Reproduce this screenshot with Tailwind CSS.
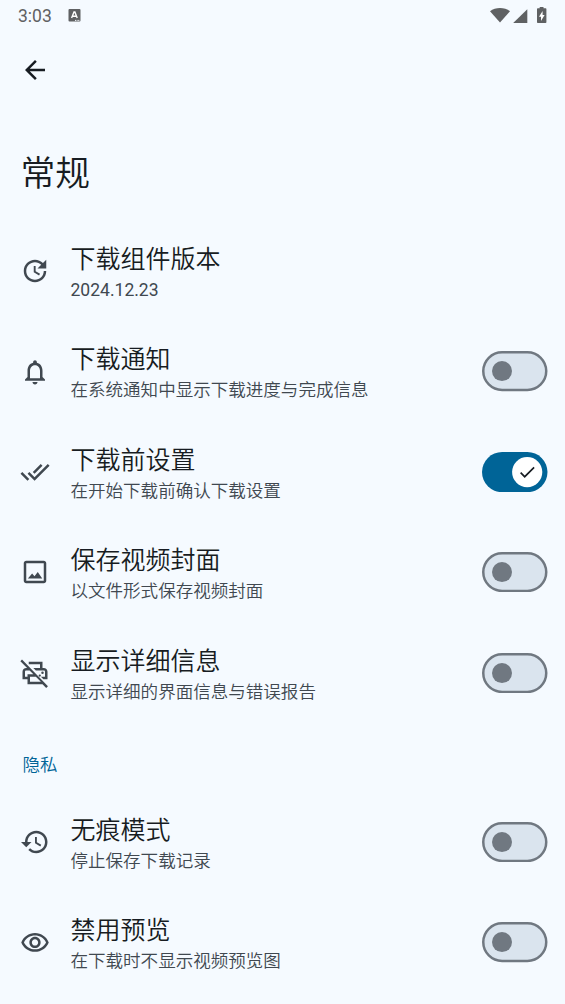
<!DOCTYPE html>
<html lang="zh-CN">
<head>
<meta charset="utf-8">
<meta name="viewport" content="width=device-width, initial-scale=1">
<title>常规</title>
<script src="https://cdn.jsdelivr.net/npm/@tailwindcss/browser@4"></script>
</head>
<body class="h-[1004px] overflow-hidden bg-[#f5faff] font-[Roboto,'Noto_Sans_CJK_SC_DemiLight','Noto_Sans_CJK_SC',sans-serif] text-[#171c22]">
<header class="flex h-8 items-center justify-between pl-[18px] pr-[17px] text-[#5f6163]">
  <div class="flex items-center gap-4">
    <span class="text-[17.5px] leading-8">3:03</span>
    <svg class="mb-[2px] h-[13px] w-[13px]" viewBox="0 0 13 13"><rect x="0.5" y="0" width="12" height="12.5" rx="1" fill="#5f6163"/><path d="M3.6 9 6 3h.9l2.3 6M4.6 7.2h3.6" fill="none" stroke="#fff" stroke-width="1.4"/><path d="M7 11.4h5" stroke="#f6faff" stroke-width="1" stroke-dasharray="1 .6"/></svg>
  </div>
  <div class="flex items-center">
    <svg class="h-[18px] w-[58px]" viewBox="490 6 58 18" fill="#5f6163"><path d="M490 10.200C495.600 5.800 504.400 5.800 510 10.200L500 21.600Z"/><path d="M527.300 8.200V22H513.200Z"/><path d="M539.700 5.800h3.800v1.500h2.100q.8 0 .8.800v13.200q0 .8-.8.800h-7.800q-.8 0-.8-.8V8.100q0-.8.8-.8h1.900z"/><path fill="#fff" d="M542.600 10v4h2l-3.600 6v-4.300h-2z"/></svg>
  </div>
</header>
<nav class="flex h-[76px] items-center pl-5">
  <svg class="h-[30px] w-[30px]" viewBox="0 0 24 24" fill="currentColor"><path d="M20 11H7.830l5.590-5.590L12 4l-8 8 8 8 1.410-1.410L7.830 13H20v-2z"/></svg>
</nav>
<h1 class="mt-[41px] flex h-[50px] items-center pl-[20.500px] text-[34.800px] font-[350] leading-[50px]">常规</h1>
<main class="mt-[22px] flex flex-col">
  <section class="flex h-[100.400px] items-center pl-5 pr-[17.500px]">
    <svg class="h-[30px] w-[30px] shrink-0 text-[#404850]" viewBox="0 0 24 24" fill="currentColor"><path d="M11 8v5l4.250 2.520.770-1.280-3.520-2.090V8H11zm10 2V3l-2.640 2.640C16.740 4.010 14.490 3 12 3c-4.970 0-9 4.030-9 9s4.030 9 9 9 9-4.030 9-9h-2c0 3.860-3.140 7-7 7s-7-3.140-7-7 3.140-7 7-7c1.930 0 3.680.790 4.950 2.050L14 10h7z"/></svg>
    <div class="ml-[20.500px] flex-1 pt-[2.500px]"><h2 class="text-[25px] font-[350] leading-[35px]">下载组件版本</h2><p class="text-[17.550px] leading-[26px] text-[#404850]">2024.12.23</p></div>
  </section>
  <section class="flex h-[100.400px] items-center pl-5 pr-[17.500px]">
    <svg class="h-[30px] w-[30px] shrink-0 text-[#404850]" viewBox="0 0 24 24" fill="currentColor"><path d="M12 22c1.100 0 2-.9 2-2h-4c0 1.100.9 2 2 2zm6-6v-5c0-3.070-1.630-5.640-4.500-6.320V4c0-.83-.67-1.500-1.500-1.500s-1.500.67-1.500 1.500v.68C7.640 5.360 6 7.920 6 11v5l-2 2v1h16v-1l-2-2zm-2 1H8v-6c0-2.480 1.510-4.500 4-4.500s4 2.020 4 4.500v6z"/></svg>
    <div class="ml-[20.500px] flex-1 pt-[2.500px]"><h2 class="text-[25px] font-[350] leading-[35px]">下载通知</h2><p class="text-[17.550px] font-[350] leading-[26px] text-[#404850]">在系统通知中显示下载进度与完成信息</p></div>
    <svg class="h-[40.200px] w-[65.500px]" viewBox="0 0 65.500 40.200"><rect x="1.250" y="1.250" width="63" height="37.700" rx="18.850" fill="#dae4ee" stroke="#707881" stroke-width="2.500"/><circle cx="20" cy="20.100" r="10" fill="#707881"/></svg>
  </section>
  <section class="flex h-[100.400px] items-center pl-5 pr-[17.500px]">
    <svg class="h-[30px] w-[30px] shrink-0 text-[#404850]" viewBox="0 0 24 24" fill="currentColor"><path d="M18 7l-1.410-1.410-6.340 6.340 1.410 1.410L18 7zm4.240-1.410L11.660 16.170 7.480 12l-1.410 1.410L11.660 19l12-12-1.420-1.410zM.41 13.410L6 19l1.410-1.410L1.830 12 .41 13.410z"/></svg>
    <div class="ml-[20.500px] flex-1 pt-[2.500px]"><h2 class="text-[25px] font-[350] leading-[35px]">下载前设置</h2><p class="text-[17.550px] font-[350] leading-[26px] text-[#404850]">在开始下载前确认下载设置</p></div>
    <svg class="h-[40.200px] w-[65.500px]" viewBox="0 0 65.500 40.200"><rect width="65.500" height="40.200" rx="20.100" fill="#006497"/><circle cx="45.200" cy="20.100" r="15.100" fill="#fff"/><path transform="translate(35.200 10.100) scale(.8333)" fill="#171c22" d="M9 16.170L4.830 12l-1.420 1.410L9 19 21 7l-1.410-1.410z"/></svg>
  </section>
  <section class="flex h-[100.400px] items-center pl-5 pr-[17.500px]">
    <svg class="h-[30px] w-[30px] shrink-0 text-[#404850]" viewBox="0 0 24 24" fill="currentColor"><path d="M19 5v14H5V5h14m0-2H5c-1.100 0-2 .9-2 2v14c0 1.100.9 2 2 2h14c1.100 0 2-.9 2-2V5c0-1.100-.9-2-2-2z"/><path d="M14.200 12l-2.600 3.300-1.900-2.100L6.300 17.200h11.500z"/></svg>
    <div class="ml-[20.500px] flex-1 pt-[2.500px]"><h2 class="text-[25px] font-[350] leading-[35px]">保存视频封面</h2><p class="text-[17.550px] font-[350] leading-[26px] text-[#404850]">以文件形式保存视频封面</p></div>
    <svg class="h-[40.200px] w-[65.500px]" viewBox="0 0 65.500 40.200"><rect x="1.250" y="1.250" width="63" height="37.700" rx="18.850" fill="#dae4ee" stroke="#707881" stroke-width="2.500"/><circle cx="20" cy="20.100" r="10" fill="#707881"/></svg>
  </section>
  <section class="flex h-[100.400px] items-center pl-5 pr-[17.500px]">
    <svg class="h-[30px] w-[30px] shrink-0 text-[#404850]" viewBox="0 0 24 24" fill="currentColor"><path d="M1.600 1.200L.3 2.600 5.700 8H5c-1.660 0-3 1.340-3 3v6h4v4h12l2.950 2.960 1.410-1.410zM6 15H4v-4c0-.55.45-1 1-1h2.700l3 3H6v2zm2 4v-4h4.700l4 4H8zM7 3v2h9v3h-5.340l2 2H19c.55 0 1 .45 1 1v4h-3.300l2 2H22v-6c0-1.660-1.340-3-3-3h-1V3z"/><circle cx="18" cy="11.700" r="1"/><circle cx="15.800" cy="14" r=".9"/></svg>
    <div class="ml-[20.500px] flex-1 pt-[2.500px]"><h2 class="text-[25px] font-[350] leading-[35px]">显示详细信息</h2><p class="text-[17.550px] font-[350] leading-[26px] text-[#404850]">显示详细的界面信息与错误报告</p></div>
    <svg class="h-[40.200px] w-[65.500px]" viewBox="0 0 65.500 40.200"><rect x="1.250" y="1.250" width="63" height="37.700" rx="18.850" fill="#dae4ee" stroke="#707881" stroke-width="2.500"/><circle cx="20" cy="20.100" r="10" fill="#707881"/></svg>
  </section>
  <h3 class="h-[69px] pl-[22.500px] pt-[29px] text-[17.550px] font-[350] leading-[26px] text-[#006497]">隐私</h3>
  <section class="flex h-[100.400px] items-center pl-5 pr-[17.500px]">
    <svg class="h-[30px] w-[30px] shrink-0 text-[#404850]" viewBox="0 0 24 24" fill="currentColor"><path d="M13 3c-4.970 0-9 4.030-9 9H.8L5 16.200 9.200 12H6c0-3.870 3.130-7 7-7s7 3.130 7 7-3.130 7-7 7c-1.930 0-3.680-.79-4.940-2.060l-1.420 1.420C8.270 19.990 10.510 21 13 21c4.970 0 9-4.030 9-9s-4.030-9-9-9zm-1 5v5l4.250 2.520.77-1.280-3.520-2.080V8H12z"/></svg>
    <div class="ml-[20.500px] flex-1 pt-[2.500px]"><h2 class="text-[25px] font-[350] leading-[35px]">无痕模式</h2><p class="text-[17.550px] font-[350] leading-[26px] text-[#404850]">停止保存下载记录</p></div>
    <svg class="h-[40.200px] w-[65.500px]" viewBox="0 0 65.500 40.200"><rect x="1.250" y="1.250" width="63" height="37.700" rx="18.850" fill="#dae4ee" stroke="#707881" stroke-width="2.500"/><circle cx="20" cy="20.100" r="10" fill="#707881"/></svg>
  </section>
  <section class="flex h-[100.400px] items-center pl-5 pr-[17.500px]">
    <svg class="h-[30px] w-[30px] shrink-0 text-[#404850]" viewBox="0 0 24 24" fill="currentColor"><path d="M12 6c3.790 0 7.170 2.130 8.820 5.500C19.170 14.870 15.790 17 12 17s-7.170-2.130-8.820-5.500C4.830 8.130 8.210 6 12 6m0-2C7 4 2.730 7.110 1 11.500 2.730 15.890 7 19 12 19s9.270-3.110 11-7.500C21.270 7.110 17 4 12 4zm0 5c1.380 0 2.500 1.120 2.500 2.500S13.380 14 12 14s-2.500-1.120-2.500-2.500S10.620 9 12 9m0-2c-2.480 0-4.500 2.020-4.500 4.500S9.520 16 12 16s4.500-2.020 4.500-4.500S14.480 7 12 7z"/></svg>
    <div class="ml-[20.500px] flex-1 pt-[2.500px]"><h2 class="text-[25px] font-[350] leading-[35px]">禁用预览</h2><p class="text-[17.550px] font-[350] leading-[26px] text-[#404850]">在下载时不显示视频预览图</p></div>
    <svg class="h-[40.200px] w-[65.500px]" viewBox="0 0 65.500 40.200"><rect x="1.250" y="1.250" width="63" height="37.700" rx="18.850" fill="#dae4ee" stroke="#707881" stroke-width="2.500"/><circle cx="20" cy="20.100" r="10" fill="#707881"/></svg>
  </section>
</main>
</body>
</html>
